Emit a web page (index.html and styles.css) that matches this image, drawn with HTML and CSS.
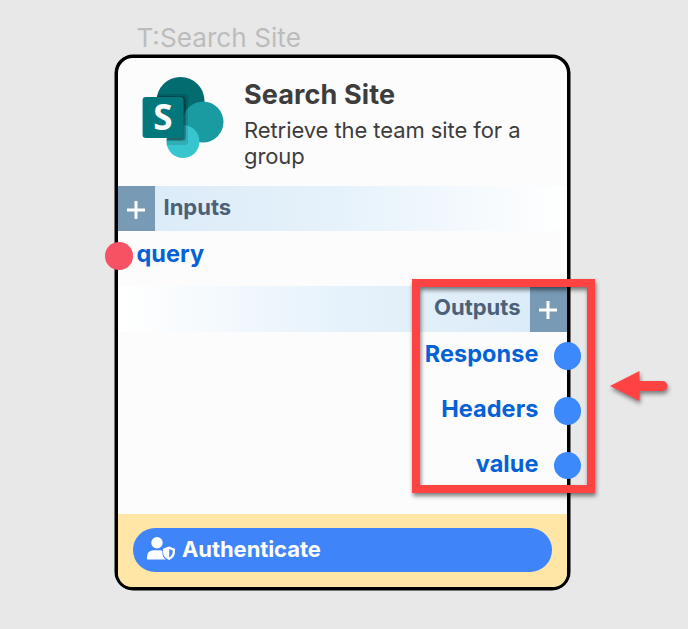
FILE: index.html
```html
<!DOCTYPE html>
<html lang="en">
<head>
<meta charset="utf-8">
<title>Search Site</title>
<link rel="stylesheet" href="styles.css">
</head>
<body>
<main class="canvas">
  <div class="node-label"><span>T:Search Site</span></div>
  <section class="node">
    <header class="head">
      <svg class="logo" viewBox="0 0 82 82" width="82" height="82">
        <defs><clipPath id="balls"><circle cx="38.5" cy="24" r="24"/><circle cx="61" cy="45" r="20.5"/><circle cx="41" cy="65" r="16.5"/></clipPath></defs>
        <circle cx="38.5" cy="24" r="24" fill="#036c70"/>
        <circle cx="61" cy="45" r="20.5" fill="#1a9ba1"/>
        <circle cx="41" cy="64.500" r="16.5" fill="#37c6d0"/>
        <g clip-path="url(#balls)" fill="#000">
          <rect x="10" y="17" width="36" height="51" rx="3.5" opacity=".12"/>
          <rect x="8" y="19" width="36" height="45" rx="3.5" opacity=".22"/>
          <rect x="6" y="20" width="36.500" height="43" rx="3.500" opacity=".25"/>
        </g>
        <rect x="0.600" y="20" width="41" height="41" rx="3.300" fill="#03787c"/>
        <text class="logo-letter" x="20.800" y="53" text-anchor="middle">S</text>
      </svg>
      <div class="head-text">
        <h1><span>Search Site</span></h1>
        <p><span>Retrieve the team site for a<br>group</span></p>
      </div>
    </header>
    <div class="bar inputs">
      <button class="add"><svg viewBox="0 0 18 18" width="18" height="18"><path d="M9 0v18M0 9h18"/></svg></button>
      <span class="bar-title">Inputs</span>
    </div>
    <div class="port in"><i class="dot"></i><span>query</span></div>
    <div class="bar outputs">
      <span class="bar-title">Outputs</span>
      <button class="add"><svg viewBox="0 0 18 18" width="18" height="18"><path d="M9 0v18M0 9h18"/></svg></button>
    </div>
    <div class="port out"><span>Response</span><i class="dot"></i></div>
    <div class="port out"><span>Headers</span><i class="dot"></i></div>
    <div class="port out"><span>value</span><i class="dot"></i></div>
    <footer class="foot">
      <button class="auth">
        <svg viewBox="0 0 28 23" width="28" height="23" fill="#fff">
          <circle cx="10" cy="5.700" r="5.700"/>
          <path d="M0 22.500v-2.200Q0 13.300 7 13.300h6q1.400 0 2.500.4v2.300q0 4 3.300 6.500z"/>
          <path fill-rule="evenodd" d="M22 9.500l6 2.300v2.900q0 5.700-6 8.300q-6-2.600-6-8.300v-2.900zM22.200 12v8.400q3.600-2 3.600-6.800z"/>
        </svg>
        <span>Authenticate</span>
      </button>
    </footer>
  </section>
  <div class="highlight"></div>
  <svg class="arrow" viewBox="0 0 60 32" width="60" height="32"><path d="M0 16L29.500 1v10H52.500a5 5 0 0 1 0 10H29.500v10z" fill="#ff4343"/></svg>
</main>
</body>
</html>
```
FILE: styles.css
```css
* { box-sizing: border-box; }
body { margin: 0; font-family: Inter, "Liberation Sans", sans-serif; }
h1, p { margin: 0; }
button { border: 0; padding: 0; font: inherit; }
.canvas {
  position: relative;
  width: 688px;
  height: 629px;
  padding: 22px 0 0 115px;
  background: #e8e8e8;
  overflow: hidden;
}
.node-label {
  height: 33px;
  padding-left: 21.500px;
  font-size: 26.200px;
  line-height: 32px;
  color: #bcbcbc;
}
.node {
  width: 455px;
  height: 535px;
  display: flex;
  flex-direction: column;
  border: 3px solid #000;
  border-radius: 18px;
  box-shadow: 0 0 0 .5px #000;
  background: #fcfcfc;
}
.head { display: flex; height: 128px; padding: 19px 0 0 24px; }
.logo { flex: none; }
.logo-letter { font: 700 35px "Open Sans", sans-serif; fill: #fff; }
.head-text { padding-left: 20px; color: #3d3d3d; white-space: nowrap; }
.head h1 { font-size: 27px; font-weight: 700; line-height: 36px; letter-spacing: .13px; }
.head p { font-size: 22px; line-height: 26px; padding-top: 4px; letter-spacing: -.08px; }
.bar { flex: none; display: flex; height: 45px; color: #4b6178; }
.inputs { background: linear-gradient(90deg, #d9eaf7, #e6f2fb 50%, #fff); }
.outputs { justify-content: flex-end; height: 45.500px; background: linear-gradient(270deg, #d9eaf7, #e6f2fb 50%, #fff); }
.bar-title { font-size: 22px; font-weight: 650; line-height: 43px; padding: 0 9.500px 0 8.500px; }
.add { width: 37px; display: grid; place-items: center; padding: 3px 1px 0 0; background: #789ab5; }
.add path { stroke: #fff; stroke-width: 3; fill: none; }
.port {
  flex: none;
  display: flex;
  align-items: center;
  height: 55px;
  color: #0562d6;
  font-size: 23.500px;
  font-weight: 700;
}
.port span { margin-top: -5px; letter-spacing: .05px; }
.dot { width: 27.500px; height: 27.500px; border-radius: 50%; background: #3c89fb; }
.in { padding-bottom: 5px; }
.in .dot { margin: 0 4px 0 -13px; background: #f65264; }
.out { justify-content: flex-end; height: 54.800px; padding-bottom: 5.500px; }
.out .dot { margin: 0 -14px 0 15px; }
.foot {
  height: 73px;
  margin-top: auto;
  padding: 14px 15px;
  border-radius: 0 0 14px 14px;
  background: #ffe6a6;
}
.auth {
  display: flex;
  align-items: center;
  width: 419px;
  height: 44px;
  padding-left: 14px;
  gap: 7px;
  border-radius: 22px;
  background: #3f84f8;
  color: #fff;
  font-size: 22px;
  font-weight: 700;
}
.auth span { margin-top: -2px; letter-spacing: -.08px; }
.auth svg { margin-top: -3px; }
.highlight {
  position: absolute;
  left: 412px;
  top: 279px;
  width: 183px;
  height: 214px;
  border: 8px solid #ff4343;
  filter: drop-shadow(1px 3px 2px rgba(0, 0, 0, .5));
}
.arrow {
  position: absolute;
  left: 609.500px;
  top: 370px;
  overflow: visible;
  filter: drop-shadow(1px 3px 2px rgba(0, 0, 0, .45));
}
```
